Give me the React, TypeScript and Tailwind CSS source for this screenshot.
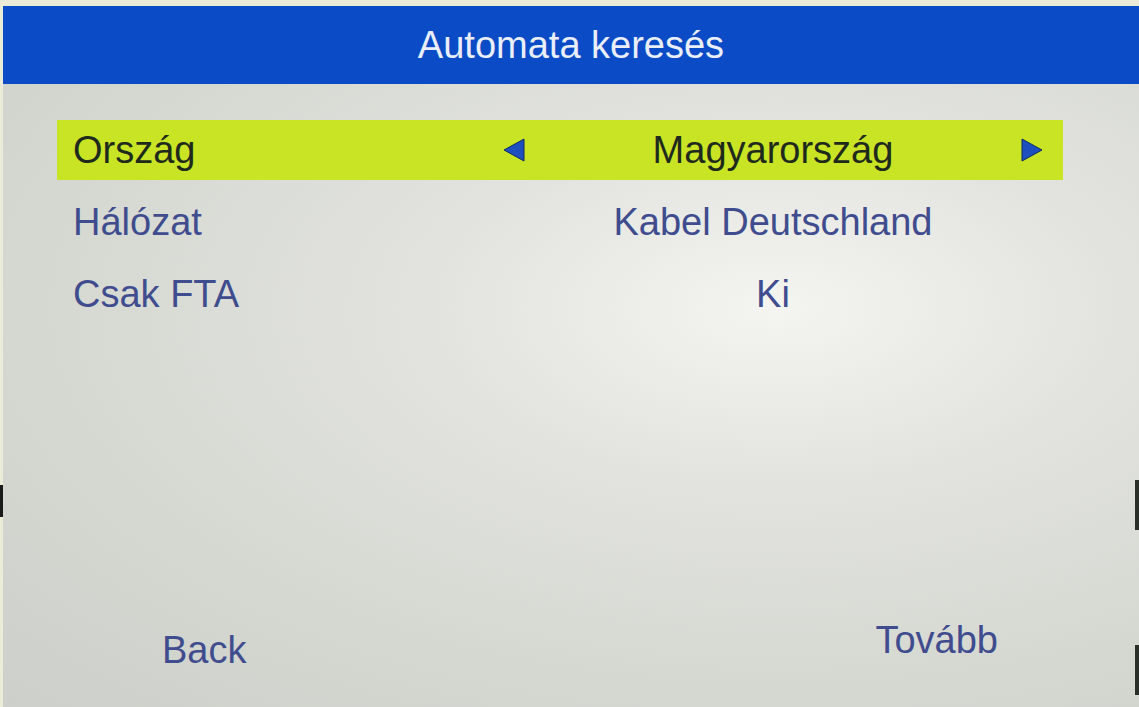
import { ReactNode } from 'react';

type Row = { label: string; value: string; active?: boolean };

const rows: Row[] = [
  { label: 'Ország', value: 'Magyarország', active: true },
  { label: 'Hálózat', value: 'Kabel Deutschland' },
  { label: 'Csak FTA', value: 'Ki' },
];

function Arrow({ dir, hidden }: { dir: 'left' | 'right'; hidden?: boolean }) {
  return (
    <svg width="22" height="24" viewBox="0 0 22 24" className={hidden ? 'invisible' : ''}>
      {dir === 'left' ? (
        <polygon points="21,1 21,23 1,12" fill="#1d4fbf" stroke="#0d2a63" strokeWidth="1" />
      ) : (
        <polygon points="1,1 1,23 21,12" fill="#1d4fbf" stroke="#0d2a63" strokeWidth="1" />
      )}
    </svg>
  );
}

function MenuRow({ row }: { row: Row }) {
  const text = row.active ? 'text-[#1e2a1c]' : 'text-[#3f4c8e]';
  return (
    <div
      className={`h-[60px] flex items-center ${row.active ? 'bg-[#c9e424]' : ''} ${text}`}
    >
      <div className="w-[430px] pl-4 truncate">{row.label}</div>
      <div className="flex-1 flex items-center pl-4 pr-5">
        <Arrow dir="left" hidden={!row.active} />
        <div className="flex-1 text-center">{row.value}</div>
        <Arrow dir="right" hidden={!row.active} />
      </div>
    </div>
  );
}

function Bezel({ children }: { children: ReactNode }) {
  return (
    <div className="relative w-[1139px] h-[707px] bg-[#ebebd8] pt-[6px] pl-[3px] overflow-hidden">
      {children}
      <div className="absolute left-0 top-[485px] w-[3px] h-[32px] bg-[#1a1a1a]" />
      <div className="absolute right-0 top-[480px] w-[4px] h-[50px] bg-[#2a2f2a]" />
      <div className="absolute right-0 top-[645px] w-[4px] h-[50px] bg-[#2a2f2a]" />
    </div>
  );
}

export default function App() {
  return (
    <Bezel>
      <div
        className="w-full h-full flex flex-col text-[38px] leading-[44px]"
        style={{ fontFamily: '"Liberation Sans", Arial, sans-serif' }}
      >
        <div className="h-[78px] shrink-0 bg-[#0b4cc6] flex items-center justify-center text-[#e9eef9] text-[38px]">
          Automata keresés
        </div>

        <div className="flex-1 flex flex-col bg-[radial-gradient(ellipse_at_68%_36%,#f4f5f1_0%,#e2e3de_32%,#d5d7d1_68%,#cdd0ca_100%)]">
          <div className="pt-[36px] pl-[54px] pr-[76px] flex flex-col gap-3">
            {rows.map((r) => (
              <MenuRow key={r.label} row={r} />
            ))}
          </div>

          <div className="mt-auto flex items-start justify-between pl-[159px] pr-[141px] pb-[35px] text-[#3f4c8e]">
            <span className="mt-[10px]">Back</span>
            <span>Tovább</span>
          </div>
        </div>
      </div>
    </Bezel>
  );
}
